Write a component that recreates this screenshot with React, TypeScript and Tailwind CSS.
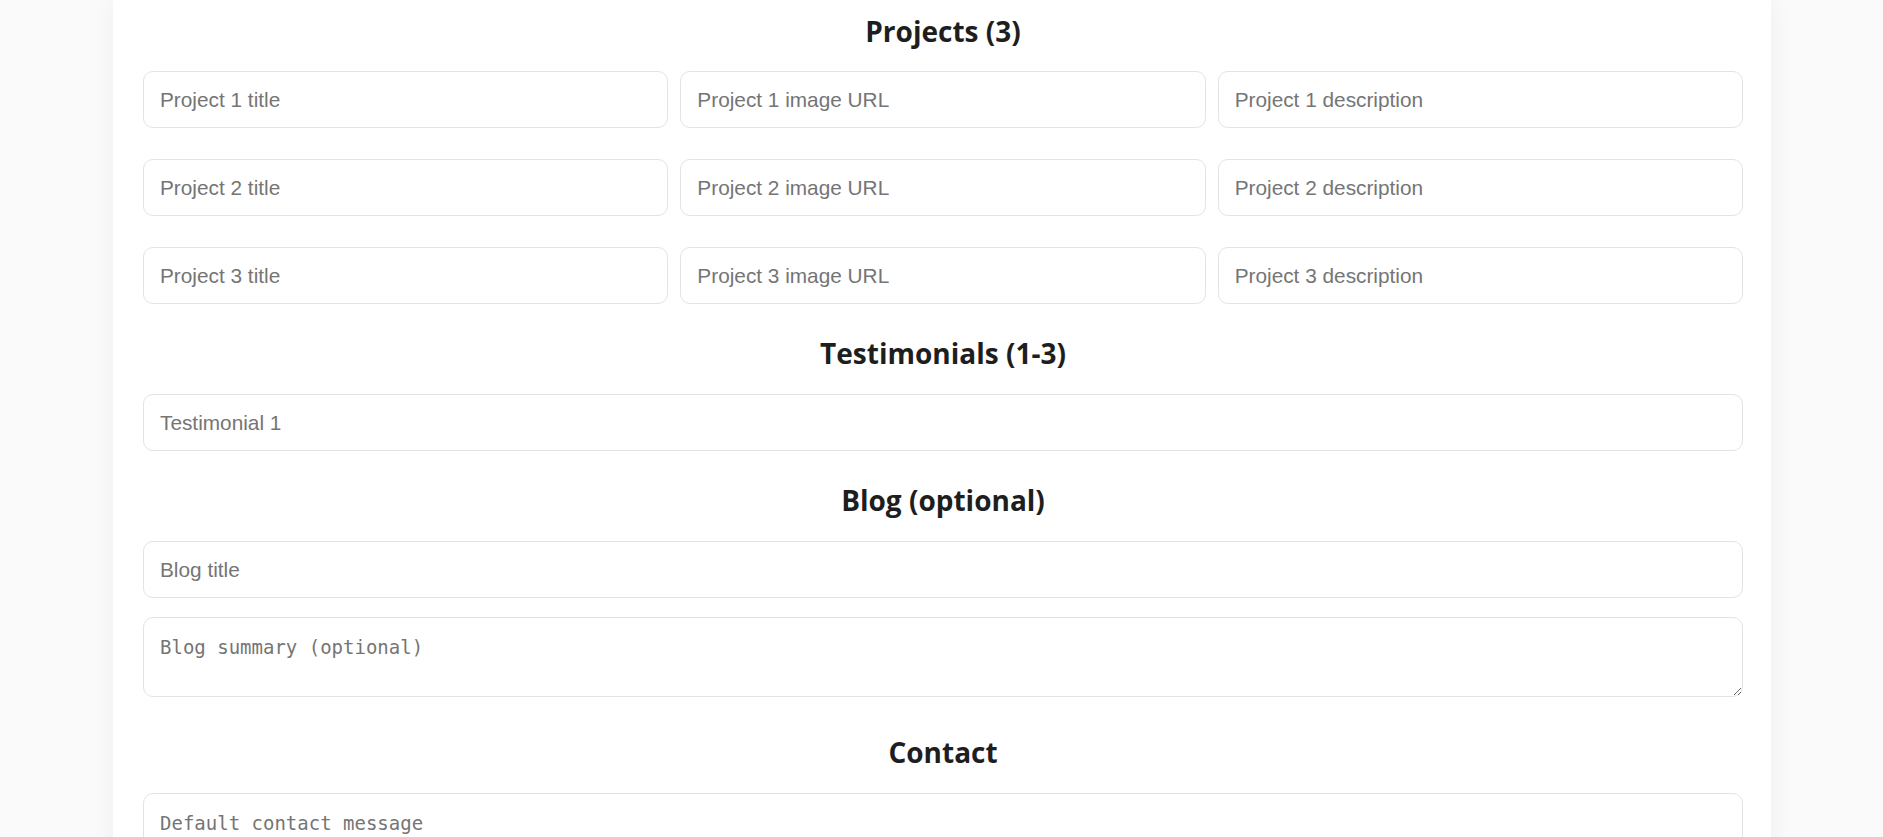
const inputClass = "block w-full h-[57px] mb-[19px] px-[16px] border border-[#e3e3e3] rounded-[10px] bg-white font-['Liberation_Sans',Arial,sans-serif] text-[20.8px] text-[#333] placeholder:text-[#757575] outline-none"
const areaClass = "block w-full px-[16px] pt-[18px] border border-[#e3e3e3] rounded-[10px] bg-white font-['DejaVu_Sans_Mono','Liberation_Mono',monospace] text-[19px] leading-[22px] text-[#333] placeholder:text-[#757575] outline-none"

const Heading = ({ children, first }: { children: React.ReactNode, first?: boolean }) => (
    <h2 className={first
        ? "pt-[11px] pb-[20px] text-center font-['Open_Sans','Noto_Sans',sans-serif] text-[28px] leading-[40px] font-bold text-[#1e1e1e]"
        : "pt-[10px] pb-[21px] text-center font-['Open_Sans','Noto_Sans',sans-serif] text-[28px] leading-[40px] font-bold text-[#1e1e1e]"}>
        {children}
    </h2>
)

const App = () => {
    const projects = [1, 2, 3]
    return (
        <div className="w-full h-[837px] overflow-hidden bg-[#fafafa]">
            <div className="w-[1658px] ml-[113px] min-h-full bg-white pl-[30px] pr-[28px] shadow-[0_0_24px_rgba(0,0,0,0.05)]">
                <Heading first>Projects (3)</Heading>
                <div className="grid grid-cols-3 gap-x-3 gap-y-3">
                    {projects.map((n) => (
                        <div key={n} className="contents">
                            <input className={inputClass} type="text" placeholder={`Project ${n} title`} />
                            <input className={inputClass} type="text" placeholder={`Project ${n} image URL`} />
                            <input className={inputClass} type="text" placeholder={`Project ${n} description`} />
                        </div>
                    ))}
                </div>

                <Heading>Testimonials (1-3)</Heading>
                <input className={inputClass} type="text" placeholder="Testimonial 1" />

                <Heading>Blog (optional)</Heading>
                <input className={inputClass} type="text" placeholder="Blog title" />
                <textarea className={areaClass + " h-[80px] mb-[25px]"} placeholder="Blog summary (optional)" />

                <Heading>Contact</Heading>
                <textarea className={areaClass + " h-[130px] mb-[19px]"} placeholder="Default contact message" />
            </div>
        </div>
    )
}

export default App;
